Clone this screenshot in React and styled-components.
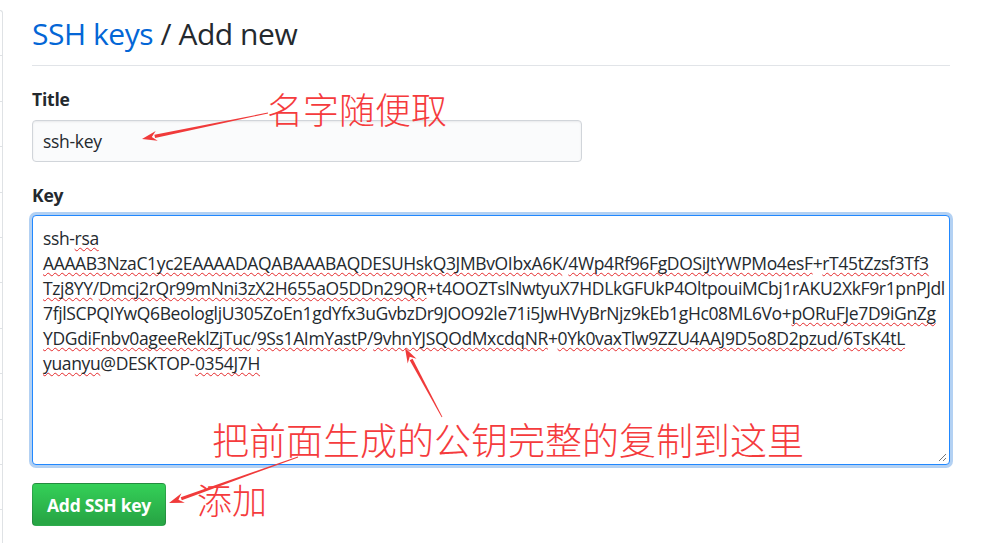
import React from 'react';
import styled, { createGlobalStyle } from 'styled-components';

const GlobalStyle = createGlobalStyle`
  html, body { margin: 0; padding: 0; background: #fff; }
  body {
    font-family: "Open Sans", "Noto Sans", sans-serif;
    color: #24292e;
    overflow: hidden;
  }
`;

const Page = styled.div`
  position: relative;
  display: flex;
  width: 988px;
  height: 543px;
  overflow: hidden;
`;

const Sidebar = styled.nav`
  flex: none;
  align-self: flex-start;
  margin-top: 10px;
  width: 2px;
  border-top: 1px solid #dfe2e5;
  border-right: 1px solid #dfe2e5;
  border-top-right-radius: 4px;
  display: flex;
  flex-direction: column;
`;

const SideItem = styled.div`
  box-sizing: border-box;
  height: 45.4px;
  border-bottom: 1px solid #dfe2e5;
`;

const Main = styled.main`
  margin-left: 29px;
  width: 918px;
  display: flex;
  flex-direction: column;
`;

const Subhead = styled.div`
  padding: 15px 0 13px;
  border-bottom: 1px solid #e1e4e8;
  margin-bottom: 22px;
`;

const Heading = styled.h2`
  margin: 0;
  font-size: 30px;
  font-weight: 400;
  line-height: 37px;
  letter-spacing: -0.45px;
  color: #24292e;
`;

const Crumb = styled.a`
  color: #0366d6;
  text-decoration: none;
`;

const FormGroup = styled.div`
  display: flex;
  flex-direction: column;
  margin-bottom: ${(p) => p.$mb || 22}px;
`;

const Label = styled.label`
  font-size: 17.5px;
  font-weight: 700;
  line-height: 22px;
  letter-spacing: -0.2px;
  margin-bottom: ${(p) => p.$mb || 10}px;
`;

const TextInput = styled.div`
  box-sizing: border-box;
  width: 550px;
  height: 42px;
  padding: 0 10px;
  display: flex;
  align-items: center;
  background: #fafbfc;
  border: 1px solid #d1d5da;
  border-radius: 4px;
  box-shadow: inset 0 1px 2px rgba(27, 31, 35, 0.075);
  font-size: 17.5px;
  letter-spacing: -0.3px;
  color: #24292e;
`;

const TextArea = styled.div`
  position: relative;
  box-sizing: border-box;
  width: 918px;
  height: 250px;
  padding: 10px 10px;
  background: #fff;
  border: 1px solid #2188ff;
  border-radius: 4px;
  box-shadow: 0 0 0 3px rgba(3, 102, 214, 0.3);
  font-size: 17.5px;
  line-height: 25px;
  letter-spacing: -0.36px;
  color: #24292e;
`;

const KeyLine = styled.div`
  white-space: nowrap;
`;

const Word = styled.span`
  text-decoration: ${(p) => (p.$err ? 'underline wavy #e5292b' : 'none')};
  text-decoration-thickness: 1px;
  text-underline-offset: 2px;
  text-decoration-skip-ink: none;
`;

const Grip = styled.svg`
  position: absolute;
  right: 2px;
  bottom: 2px;
`;

const Button = styled.button`
  align-self: flex-start;
  box-sizing: border-box;
  width: 134px;
  height: 43px;
  padding: 0;
  border: 1px solid rgba(27, 31, 35, 0.2);
  border-radius: 4px;
  background: linear-gradient(-180deg, #34d058 0%, #28a745 90%);
  color: #fff;
  font-family: inherit;
  font-size: 17.5px;
  font-weight: 700;
  letter-spacing: -0.3px;
  cursor: pointer;
`;

const Note = styled.div`
  position: absolute;
  left: ${(p) => p.$x}px;
  top: ${(p) => p.$y}px;
  font-family: "Noto Sans CJK SC", sans-serif;
  font-weight: 300;
  font-size: ${(p) => p.$size}px;
  letter-spacing: ${(p) => p.$ls || 0}px;
  line-height: 1;
  color: #f53b3d;
  white-space: nowrap;
`;

const Overlay = styled.svg`
  position: absolute;
  left: 0;
  top: 0;
  pointer-events: none;
`;

const lines = [
  [['ssh-', 0], ['rsa', 1]],
  [
    ['AAAAB3NzaC1yc2EAAAADAQABAAABAQDESUHskQ3JMBvOIbxA6K', 1],
    ['/', 0],
    ['4Wp4Rf96FgDOSiJtYWPMo4esF', 1],
    ['+', 0],
    ['rT45tZzsf3Tf3', 1],
  ],
  [
    ['Tzj8YY', 1],
    ['/', 0],
    ['Dmcj2rQr99mNni3zX2H655aO5DDn29QR', 1],
    ['+t4OOZTslNwtyuX7HDLkGFUkP4OltpouiMCbj1rAKU2XkF9r1pnPJdl', 0],
  ],
  [
    ['7fjlSCPQIYwQ6BeologljU305ZoEn1gdYfx3uGvbzDr9JOO92le71i5JwHVyBrNjz9kEb1gHc08ML6Vo+', 0],
    ['pORuFJe7D9iGnZg', 1],
  ],
  [
    ['YDGdiFnbv0ageeReklZjTuc', 1],
    ['/', 0],
    ['9Ss1AImYastP', 1],
    ['/', 0],
    ['9vhnYJSQOdMxcdqNR', 1],
    ['+', 0],
    ['0Yk0vaxTlw9ZZU4AAJ9D5o8D2pzud', 1],
    ['/', 0],
    ['6TsK4tL', 1],
  ],
  [['yuanyu', 1], ['@DESKTOP-', 0], ['0354J7H', 1]],
];

function Arrow({ x1, y1, x2, y2 }) {
  const dx = x2 - x1;
  const dy = y2 - y1;
  const len = Math.hypot(dx, dy);
  const ux = dx / len;
  const uy = dy / len;
  const nx = -uy;
  const ny = ux;
  const headLen = 13;
  const headW = 5;
  const bx = x2 - ux * headLen;
  const by = y2 - uy * headLen;
  const shaft = [
    [x1 + nx * 0.4, y1 + ny * 0.4],
    [bx + nx * 1.6, by + ny * 1.6],
    [bx - nx * 1.6, by - ny * 1.6],
    [x1 - nx * 0.4, y1 - ny * 0.4],
  ];
  const head = [
    [x2, y2],
    [bx + nx * headW - ux * 2, by + ny * headW - uy * 2],
    [bx + ux * 3, by + uy * 3],
    [bx - nx * headW - ux * 2, by - ny * headW - uy * 2],
  ];
  const pts = (a) => a.map((p) => p.join(',')).join(' ');
  return (
    <g fill="#f03a3a">
      <polygon points={pts(shaft)} />
      <polygon points={pts(head)} />
    </g>
  );
}

export default function App() {
  return (
    <>
      <GlobalStyle />
      <Page>
        <Sidebar>
          {Array.from({ length: 12 }).map((_, i) => (
            <SideItem key={i} />
          ))}
        </Sidebar>
        <Main>
          <Subhead>
            <Heading>
              <Crumb href="#">SSH keys</Crumb> / Add new
            </Heading>
          </Subhead>
          <FormGroup>
            <Label>Title</Label>
            <TextInput>ssh-key</TextInput>
          </FormGroup>
          <FormGroup $mb={18}>
            <Label $mb={9}>Key</Label>
            <TextArea role="textbox">
              {lines.map((line, i) => (
                <KeyLine key={i}>
                  {line.map(([t, e], j) => (
                    <Word key={j} $err={!!e}>
                      {t}
                    </Word>
                  ))}
                </KeyLine>
              ))}
              <Grip width="10" height="10" viewBox="0 0 10 10">
                <path d="M9 2 L2 9 M9 6 L6 9" stroke="#777" strokeWidth="1" />
              </Grip>
            </TextArea>
          </FormGroup>
          <Button type="button">Add SSH key</Button>
        </Main>
        <Overlay width="988" height="543" viewBox="0 0 988 543">
          <Arrow x1={268} y1={113} x2={142} y2={139} />
          <Arrow x1={442} y1={417} x2={405} y2={348} />
          <Arrow x1={298} y1={457} x2={169} y2={503} />
        </Overlay>
        <Note $x={267} $y={90} $size={36}>名字随便取</Note>
        <Note $x={212} $y={421} $size={37}>把前面生成的公钥完整的复制到这里</Note>
        <Note $x={197} $y={481} $size={35}>添加</Note>
      </Page>
    </>
  );
}
